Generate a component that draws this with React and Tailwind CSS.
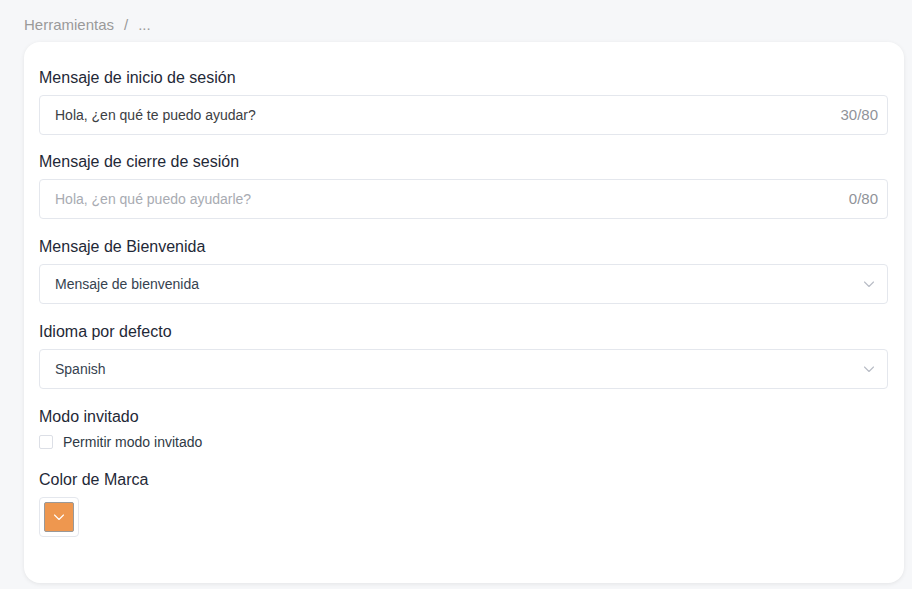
import React from "react";

function Chevron({ className = "" }) {
  return (
    <svg width="12" height="12" viewBox="0 0 12 12" className={className} fill="none">
      <path d="M1.5 4 L6 8.5 L10.5 4" stroke="currentColor" strokeWidth="1.1" strokeLinecap="round" strokeLinejoin="round" />
    </svg>
  );
}

function Label({ children }) {
  return <div className="h-6 pt-px leading-[23px] text-[16px] text-[#1f2937]">{children}</div>;
}

function TextField({ value, placeholder, count }) {
  return (
    <div className="mt-[6px] flex h-10 items-center rounded-[4px] border border-[#e4e7ed] bg-white pl-[15px] pr-[9px]">
      <span className={"flex-1 text-[14px] " + (value ? "text-[#3c4043]" : "text-[#a8abb2]")}>
        {value || placeholder}
      </span>
      <span className="text-[15px] text-[#909399]">{count}</span>
    </div>
  );
}

function SelectField({ value }) {
  return (
    <div className="mt-[6px] flex h-10 items-center rounded-[4px] border border-[#e4e7ed] bg-white pl-[15px] pr-[12px]">
      <span className="flex-1 text-[14px] text-[#36424f]">{value}</span>
      <Chevron className="text-[#b8bcc6]" />
    </div>
  );
}

export default function App() {
  return (
    <div
      className="w-[912px] h-[589px] bg-[#f6f7f9] pl-6 pr-2 pt-[14px]"
      style={{ fontFamily: '"Liberation Sans", Arial, sans-serif' }}
    >
      <div className="flex h-[22px] items-center text-[15px] text-[#9a9a9a]">
        <span>Herramientas</span>
        <span className="mx-[10px]">/</span>
        <span>...</span>
      </div>
      <div className="mt-[6px] h-[541px] rounded-[16px] bg-white pl-[15px] pr-[16px] pt-[23px] shadow-[0_1px_4px_rgba(0,0,0,0.08)]">
        <Label>Mensaje de inicio de sesión</Label>
        <TextField value="Hola, ¿en qué te puedo ayudar?" count="30/80" />
        <div className="mt-[14px]">
          <Label>Mensaje de cierre de sesión</Label>
          <TextField placeholder="Hola, ¿en qué puedo ayudarle?" count="0/80" />
        </div>
        <div className="mt-[15px]">
          <Label>Mensaje de Bienvenida</Label>
          <SelectField value="Mensaje de bienvenida" />
        </div>
        <div className="mt-[15px]">
          <Label>Idioma por defecto</Label>
          <SelectField value="Spanish" />
        </div>
        <div className="mt-[15px]">
          <Label>Modo invitado</Label>
          <div className="mt-[2px] flex h-6 items-center">
            <span className="h-[14px] w-[14px] rounded-[2px] border border-[#dcdfe6] bg-white" />
            <span className="ml-[10px] text-[14px] text-[#2f3a45]">Permitir modo invitado</span>
          </div>
        </div>
        <div className="mt-[13px]">
          <Label>Color de Marca</Label>
          <div className="mt-[6px] flex h-10 w-10 items-center justify-center rounded-[4px] border border-[#e4e7ed] bg-white">
            <div className="flex h-[30px] w-[30px] items-center justify-center rounded-[2px] border border-[#999] bg-[#ee974f]">
              <Chevron className="text-white" />
            </div>
          </div>
        </div>
      </div>
    </div>
  );
}
